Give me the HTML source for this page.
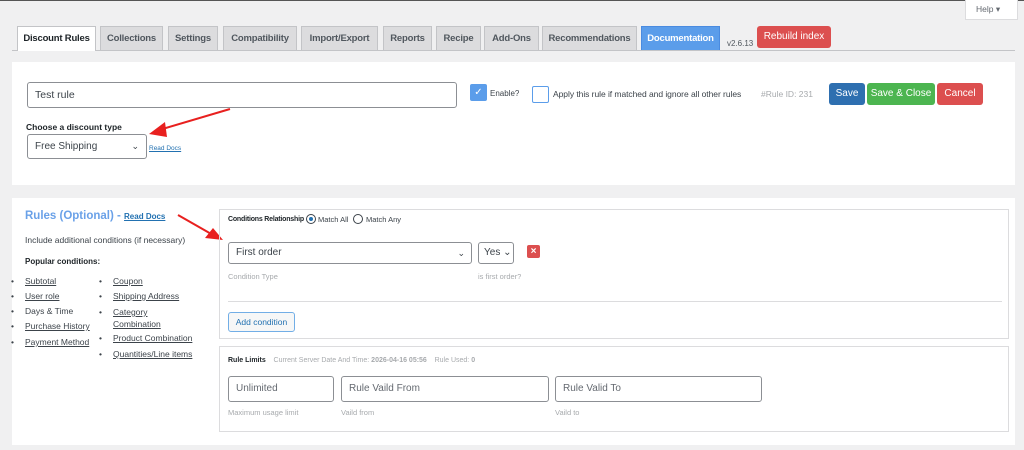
<!DOCTYPE html>
<html><head><meta charset="utf-8"><style>
*{box-sizing:border-box;margin:0;padding:0}
body{width:1024px;height:450px;background:#f0f0f1;font-family:"Liberation Sans",sans-serif;color:#3c434a;position:relative;overflow:hidden;font-size:11px}
.a{position:absolute}
.tab{position:absolute;top:26px;height:24px;background:#dcdcde;border:1px solid #c3c4c7;border-bottom:none;font-size:9.5px;letter-spacing:-0.2px;font-weight:bold;color:#50575e;text-align:center;line-height:23px;white-space:nowrap}
.panel{position:absolute;left:12px;width:1003px;background:#fff}
.inp{position:absolute;border:1px solid #8c8f94;border-radius:3px;background:#fff;font-size:10.5px;color:#3c434a;padding-left:7px}
.btn{position:absolute;color:#fff;font-size:10px;text-align:center;border-radius:3px;white-space:nowrap}
.lnk{color:#3c434a;text-decoration:underline}
.sm{font-size:7.5px;color:#a7aaad}
ul{list-style:none}
li{font-size:8.5px;position:relative;padding-left:14px;height:15px;white-space:nowrap}
li:before{content:"•";position:absolute;left:0;top:0}
</style></head><body>
<div class="a" style="left:0;top:0;width:1024px;height:1px;background:#555"></div>
<div class="a" style="left:965px;top:0;width:53px;height:20px;background:#fff;border:1px solid #dcdcde;border-top:none;font-size:8.5px;color:#646970;line-height:18px;padding-left:10px">Help ▾</div>
<div class="a" style="left:12px;top:50px;width:1003px;height:1px;background:#c3c4c7"></div>
<div class="tab" style="left:17px;width:79px;color:#1d2327;height:25px;background:#fff">Discount Rules</div>
<div class="tab" style="left:100px;width:63px">Collections</div>
<div class="tab" style="left:168px;width:50px">Settings</div>
<div class="tab" style="left:223px;width:74px">Compatibility</div>
<div class="tab" style="left:301px;width:77px">Import/Export</div>
<div class="tab" style="left:383px;width:49px">Reports</div>
<div class="tab" style="left:436px;width:45px">Recipe</div>
<div class="tab" style="left:484px;width:55px">Add-Ons</div>
<div class="tab" style="left:542px;width:95px">Recommendations</div>
<div class="tab" style="left:641px;width:79px;background:#5b9dea;color:#fff;border-color:#4a8be0">Documentation</div>
<div class="a" style="left:727px;top:39px;font-size:8px;color:#50575e">v2.6.13</div>
<div class="btn" style="left:757px;top:26px;width:74px;height:22px;background:#dc4f4f;line-height:22px">Rebuild index</div>

<div class="panel" style="top:62px;height:123px"></div>
<div class="inp" style="left:27px;top:82px;width:430px;height:26px;line-height:24px">Test rule</div>
<div class="a" style="left:470px;top:84px;width:17px;height:17px;background:#5b9dea;border-radius:2px;color:#fff;font-size:10px;text-align:center;line-height:17px">✓</div>
<div class="a" style="left:490px;top:89px;font-size:8px">Enable?</div>
<div class="a" style="left:532px;top:86px;width:17px;height:17px;border:1px solid #5b9dea;border-radius:2px"></div>
<div class="a" style="left:553px;top:89px;font-size:8.5px;letter-spacing:-0.05px">Apply this rule if matched and ignore all other rules</div>
<div class="a" style="left:761px;top:89px;font-size:8.5px;color:#a7aaad">#Rule ID: 231</div>
<div class="btn" style="left:829px;top:83px;width:36px;height:22px;background:#2e6fb0;line-height:22px">Save</div>
<div class="btn" style="left:867px;top:83px;width:68px;height:22px;background:#4cb550;line-height:22px">Save &amp; Close</div>
<div class="btn" style="left:937px;top:83px;width:46px;height:22px;background:#dc4f4f;line-height:22px">Cancel</div>
<div class="a" style="left:26px;top:122px;font-size:8.5px;font-weight:bold;color:#1d2327">Choose a discount type</div>
<div class="inp" style="left:27px;top:134px;width:120px;height:25px;line-height:23px;font-size:10px">Free Shipping<span style="position:absolute;right:7px;font-size:9px">⌄</span></div>
<div class="a" style="left:149px;top:145px;font-size:6.5px;color:#2271b1;text-decoration:underline">Read Docs</div>
<svg class="a" style="left:145px;top:105px" width="90" height="35"><line x1="85" y1="4" x2="14" y2="25" stroke="#e8201f" stroke-width="2"/><polygon points="4,29 20,17 22,32" fill="#e8201f"/></svg>

<div class="panel" style="top:198px;height:247px"></div>
<div class="a" style="left:25px;top:210px;font-size:11.5px;font-weight:bold;color:#6aa1e8">Rules (Optional) - <span style="font-size:8px;color:#2271b1;text-decoration:underline">Read Docs</span></div>
<div class="a" style="left:25px;top:235px;font-size:8.5px">Include additional conditions (if necessary)</div>
<div class="a" style="left:25px;top:257px;font-size:8px;font-weight:bold;color:#1d2327">Popular conditions:</div>
<ul class="a" style="left:11px;top:276px"><li><span class="lnk">Subtotal</span></li><li><span class="lnk">User role</span></li><li>Days &amp; Time</li><li style="height:16px"><span class="lnk">Purchase History</span></li><li><span class="lnk">Payment Method</span></li></ul>
<ul class="a" style="left:99px;top:276px"><li><span class="lnk">Coupon</span></li><li><span class="lnk">Shipping Address</span></li><li style="height:27px;line-height:12px"><span class="lnk">Category<br>Combination</span></li><li style="height:16px"><span class="lnk">Product Combination</span></li><li><span class="lnk">Quantities/Line items</span></li></ul>
<svg class="a" style="left:175px;top:212px" width="50" height="32"><line x1="3" y1="3" x2="38" y2="23" stroke="#e8201f" stroke-width="2"/><polygon points="48,28 30,26 38,16" fill="#e8201f"/></svg>

<div class="a" style="left:219px;top:209px;width:790px;height:130px;border:1px solid #dcdcde"></div>
<div class="a" style="left:228px;top:216px;font-size:7px;letter-spacing:-0.2px;font-weight:bold;color:#1d2327">Conditions Relationship</div>
<div class="a" style="left:306px;top:214px;width:10px;height:10px;border:1px solid #3c434a;border-radius:50%"><div style="margin:2px;width:4px;height:4px;border-radius:50%;background:#2271b1"></div></div>
<div class="a" style="left:318px;top:215px;font-size:7.5px">Match All</div>
<div class="a" style="left:353px;top:214px;width:10px;height:10px;border:1px solid #3c434a;border-radius:50%"></div>
<div class="a" style="left:366px;top:215px;font-size:7.5px">Match Any</div>
<div class="inp" style="left:228px;top:242px;width:244px;height:22px;line-height:20px;font-size:10px">First order<span style="position:absolute;right:6px;font-size:9px">⌄</span></div>
<div class="inp" style="left:478px;top:242px;width:36px;height:22px;line-height:20px;font-size:10px;padding-left:5px">Yes ⌄</div>
<div class="a" style="left:527px;top:245px;width:13px;height:13px;background:#dc4f4f;border-radius:2px;color:#fff;font-size:10px;text-align:center;line-height:13px;font-weight:bold">×</div>
<div class="a sm" style="left:228px;top:272px">Condition Type</div>
<div class="a sm" style="left:478px;top:272px">is first order?</div>
<div class="a" style="left:228px;top:301px;width:774px;height:1px;background:#dcdcde"></div>
<div class="a" style="left:228px;top:312px;width:67px;height:20px;border:1px solid #72aee6;border-radius:3px;background:#f6f7f7;font-size:8.5px;color:#2271b1;text-align:center;line-height:18px">Add condition</div>

<div class="a" style="left:219px;top:346px;width:790px;height:86px;border:1px solid #dcdcde"></div>
<div class="a" style="left:228px;top:357px;font-size:7px;color:#a7aaad"><b style="color:#1d2327">Rule Limits</b> &nbsp;&nbsp; Current Server Date And Time: <b>2026-04-16 05:56</b> &nbsp;&nbsp; Rule Used: <b>0</b></div>
<div class="inp" style="left:228px;top:376px;width:106px;height:26px;line-height:24px;font-size:10px;color:#646970">Unlimited</div>
<div class="inp" style="left:341px;top:376px;width:208px;height:26px;line-height:24px;font-size:10px;color:#646970">Rule Vaild From</div>
<div class="inp" style="left:555px;top:376px;width:207px;height:26px;line-height:24px;font-size:10px;color:#646970">Rule Valid To</div>
<div class="a sm" style="left:228px;top:408px">Maximum usage limit</div>
<div class="a sm" style="left:341px;top:408px">Vaild from</div>
<div class="a sm" style="left:555px;top:408px">Vaild to</div>
</body></html>
